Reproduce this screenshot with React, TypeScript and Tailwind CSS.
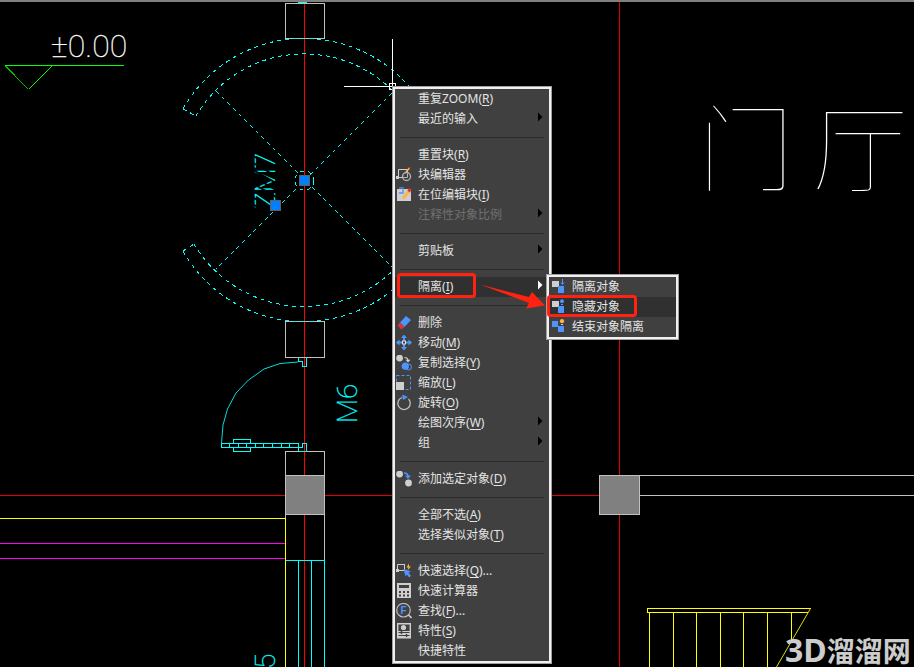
import type { ReactNode } from "react";
import clsx from "clsx";

/* ---------- types ---------- */
type MenuEntry = {
  label: string;
  hotkey?: string; // underlined access key, drawn in brackets
  suffix?: string;
  icon?: ReactNode;
  submenu?: boolean;
  disabled?: boolean;
  active?: boolean;
};

const GREY = "#cfcfcf";
const BLUE = "#4d94ff";
const ORANGE = "#ffb445";

/* ---------- icons ---------- */
function Glyph({ children }: { children: ReactNode }) {
  return (
    <svg width="16" height="16" viewBox="0 0 16 16" fill="none" aria-hidden="true">
      {children}
    </svg>
  );
}

const BlockEditIcon = (
  <Glyph>
    <path d="M11.5 5V2.5H2.5V10.5H8" stroke={GREY} />
    <rect x="0" y="9" width="3" height="3" fill={GREY} />
    <circle cx="10.5" cy="9.5" r="4" stroke="#b5b5b5" strokeWidth="1.3" />
    <path d="M11.5 6.5V10.5H7" stroke="#b5b5b5" />
    <path d="M10 5L13.5 1" stroke={ORANGE} strokeWidth="1.6" />
    <path d="M13 1.3L14 .1" stroke="#e03030" strokeWidth="1.6" />
  </Glyph>
);

const EditInPlaceIcon = (
  <Glyph>
    <path d="M1 2H15V14H1z" fill={GREY} />
    <path d="M3 .8H7V6H3" stroke={BLUE} strokeWidth="1.3" />
    <path d="M7 11.5L13 4" stroke={ORANGE} strokeWidth="3" />
    <path d="M12.5 4.5L14.5 2" stroke="#e03030" strokeWidth="3" />
  </Glyph>
);

const EraserIcon = (
  <Glyph>
    <path d="M4 7.5L10 1L15 5L8.5 12z" fill={BLUE} />
    <path d="M4 7.5L8.5 12L5.5 14.5L1.5 10.5z" fill="#e03038" />
  </Glyph>
);

const MoveIcon = (
  <Glyph>
    <path d="M8 1V14M1 7.5H15" stroke={BLUE} strokeWidth="2" />
    <path d="M8 -.5L11 3H5zM8 15.5L11 12H5zM0 7.5L3.5 4.5V10.5zM16 7.5L12.5 4.5V10.5z" fill={BLUE} />
    <rect x="6.5" y="6" width="3" height="3" fill="#404040" stroke="#e0e0e0" />
  </Glyph>
);

const CopyIcon = (
  <Glyph>
    <circle cx="3.6" cy="3.1" r="3.4" fill={GREY} />
    <path d="M8.5 2.5Q12 2.5 12 6" stroke={GREY} strokeWidth="1.2" />
    <path d="M9.5 4.8H14.5L12 7.4z" fill={GREY} />
    <circle cx="12.5" cy="12" r="3" stroke={BLUE} />
    <circle cx="9.3" cy="11.2" r="3.6" fill={BLUE} />
  </Glyph>
);

const ScaleIcon = (
  <Glyph>
    <rect x=".5" y=".5" width="14" height="14" stroke={BLUE} strokeDasharray="3 2" />
    <rect x="0" y="7" width="8" height="8" fill={GREY} />
  </Glyph>
);

const RotateIcon = (
  <Glyph>
    <path d="M12.5 4A6.2 6.2 0 1 1 6 2.5" stroke="#bdbdbd" strokeWidth="1.3" />
    <path d="M6 -.5L12 2L7 5z" fill={BLUE} />
  </Glyph>
);

const AddSelectedIcon = (
  <Glyph>
    <circle cx="3.6" cy="3" r="3.4" fill={GREY} />
    <circle cx="12.5" cy="12" r="3.4" fill={GREY} />
    <path d="M8 2Q12 2 12 5.5" stroke={BLUE} strokeWidth="1.5" />
    <path d="M9 4.5H15L12 8z" fill={BLUE} />
  </Glyph>
);

const QuickSelectIcon = (
  <Glyph>
    <path d="M9 1.5H1.5V8M1.5 7.5H8.5V1" stroke={GREY} />
    <rect x="0" y="6" width="3" height="3" fill={GREY} />
    <path d="M13 .5L10.5 4.5H12.5L11.5 7.5L15 3.5H13z" fill={ORANGE} />
    <path d="M7.5 6L15 8.5L12.5 9.8L15 12.8L13.2 14.5L10.8 11.5L9.5 13.5z" fill={BLUE} />
  </Glyph>
);

const CalculatorIcon = (
  <Glyph>
    <rect x="1" y="0" width="14" height="15" fill={GREY} />
    <path d="M3 3.5H13" stroke="#404040" strokeWidth="3" />
    <path d="M3 9H13M3 12.5H13" stroke="#404040" strokeWidth="2" strokeDasharray="2 2" />
  </Glyph>
);

const FindIcon = (
  <Glyph>
    <circle cx="7.5" cy="7.2" r="6.8" stroke="#bdbdbd" strokeWidth="1.2" />
    <path d="M12.5 12L15.5 15" stroke={GREY} strokeWidth="1.6" />
    <text x="7.5" y="11" textAnchor="middle" fill={BLUE} className="font-['Liberation_Sans'] text-[10px] font-bold">
      F
    </text>
  </Glyph>
);

const PropertiesIcon = (
  <Glyph>
    <path d="M1.7 .7H14.3V14.8H1.7z" stroke={GREY} strokeWidth="1.4" />
    <rect x="1" y="8" width="14" height="7" fill={GREY} />
    <circle cx="7.5" cy="4.5" r="2.6" fill={GREY} />
    <path d="M2.5 9.5H13.5M2.5 12.5H13.5" stroke="#404040" />
    <path d="M5.5 8V11M10.5 11V14" stroke="#404040" strokeWidth="1.5" />
  </Glyph>
);

const IsolateIcon = (
  <Glyph>
    <rect x="2" y="2" width="7" height="6" fill={GREY} />
    <rect x="8" y="7" width="6" height="7" fill={BLUE} />
    <path d="M12.5 0V5M11 3.5L12.5 5.5L14 3.5" stroke={BLUE} />
  </Glyph>
);

const HideIcon = (
  <Glyph>
    <rect x="2" y="2" width="7" height="6" fill={GREY} />
    <rect x="8" y="7" width="6" height="7" fill={BLUE} />
    <circle cx="12" cy="2.2" r="2" fill={BLUE} />
    <path d="M11 5.5H13" stroke={BLUE} />
  </Glyph>
);

const EndIsolateIcon = (
  <Glyph>
    <rect x="2" y="2" width="6" height="6" fill={BLUE} />
    <rect x="8" y="7" width="6" height="6" fill={BLUE} />
    <circle cx="12" cy="2.2" r="2.1" fill={ORANGE} />
    <path d="M11 5.5H13" stroke={GREY} />
  </Glyph>
);

/* ---------- menu data ---------- */
const groups: MenuEntry[][] = [
  [
    { label: "重复ZOOM", hotkey: "R" },
    { label: "最近的输入", submenu: true },
  ],
  [
    { label: "重置块", hotkey: "R" },
    { label: "块编辑器", icon: BlockEditIcon },
    { label: "在位编辑块", hotkey: "I", icon: EditInPlaceIcon },
    { label: "注释性对象比例", submenu: true, disabled: true },
  ],
  [{ label: "剪贴板", submenu: true }],
  [{ label: "隔离", hotkey: "I", submenu: true, active: true }],
  [
    { label: "删除", icon: EraserIcon },
    { label: "移动", hotkey: "M", icon: MoveIcon },
    { label: "复制选择", hotkey: "Y", icon: CopyIcon },
    { label: "缩放", hotkey: "L", icon: ScaleIcon },
    { label: "旋转", hotkey: "O", icon: RotateIcon },
    { label: "绘图次序", hotkey: "W", submenu: true },
    { label: "组", submenu: true },
  ],
  [{ label: "添加选定对象", hotkey: "D", icon: AddSelectedIcon }],
  [
    { label: "全部不选", hotkey: "A" },
    { label: "选择类似对象", hotkey: "T" },
  ],
  [
    { label: "快速选择", hotkey: "Q", suffix: "...", icon: QuickSelectIcon },
    { label: "快速计算器", icon: CalculatorIcon },
    { label: "查找", hotkey: "F", suffix: "...", icon: FindIcon },
    { label: "特性", hotkey: "S", icon: PropertiesIcon },
    { label: "快捷特性" },
  ],
];

const isolateGroups: MenuEntry[][] = [
  [
    { label: "隔离对象", icon: IsolateIcon },
    { label: "隐藏对象", icon: HideIcon, active: true },
    { label: "结束对象隔离", icon: EndIsolateIcon },
  ],
];

/* ---------- menu ---------- */
function MenuRow({ item }: { item: MenuEntry }) {
  return (
    <button
      type="button"
      role="menuitem"
      disabled={item.disabled}
      aria-haspopup={item.submenu ? "menu" : undefined}
      className={clsx(
        "flex h-5 w-full items-center gap-1.5 pr-1.5 pl-px text-left text-xs whitespace-nowrap",
        item.disabled ? "text-[#707070]" : "text-[#e4e4e4]",
        item.active && "bg-[#303030]"
      )}
    >
      <span className="size-4 shrink-0">{item.icon}</span>
      <span className="flex-1">
        {item.label}
        {item.hotkey && (
          <>
            (<u className="underline-offset-2">{item.hotkey}</u>)
          </>
        )}
        {item.suffix}
      </span>
      {item.submenu && (
        <svg width="5" height="20" viewBox="0 0 5 20" aria-hidden="true">
          <path d="M0 3.5V12.5L4.5 8z" fill={item.active ? "#fff" : "#000"} />
        </svg>
      )}
    </button>
  );
}

function Menu({ groups, label, className }: { groups: MenuEntry[][]; label: string; className: string }) {
  return (
    <div role="menu" aria-label={label} className={clsx("absolute border border-[#a0a0a0]", className)}>
      <div className="border-2 border-[#f0f0f0] bg-[#404040]">
        {groups.map((group, i) => (
          <div key={i} role="group">
            {i > 0 && <hr className="mx-[5px] mt-2 mb-[7px] border-t border-[#2c2c2c]" />}
            {group.map((item) => (
              <MenuRow key={item.label} item={item} />
            ))}
          </div>
        ))}
      </div>
    </div>
  );
}

/* ---------- floor plan ---------- */
function FloorPlan() {
  return (
    <svg
      width="914"
      height="667"
      viewBox="0 0 914 667"
      fill="none"
      shapeRendering="crispEdges"
      className="absolute top-0 left-0"
    >
      <defs>
        <pattern id="dashes" width="6" height="6" patternUnits="userSpaceOnUse" patternTransform="rotate(30)">
          <rect width="4" height="6" fill="#00ffff" />
        </pattern>
      </defs>

      {/* axes */}
      <g stroke="#ff0000">
        <path d="M304.5 2V667" />
        <path d="M0 495.5H599M619.5 2V667" stroke="#e00000" />
      </g>

      {/* level mark */}
      <path d="M5 65.5H124" stroke="#00ff00" />
      <path d="M52 66L28.5 89.5" stroke="#00ff00" />
      <path d="M5.5 66L28.5 89.5" stroke="#00c000" />

      {/* walls */}
      <g stroke="#c0c0c0">
        <path d="M285.5 3.5H324.5V38.5H285.5zM285.5 321.5H324.5V357.5H285.5z" />
        <path d="M285.5 518V451.5H324.5V560" />
        <path d="M639 475.5H914M639 495.5H914" />
        <path d="M285.5 475.5H324.5V514.5H285.5zM599.5 475.5H639.5V514.5H599.5z" fill="#808080" />
      </g>

      {/* revolving door */}
      <g stroke="#00ffff" strokeDasharray="4 4">
        <path d="M183 109A139 139 0 0 1 425 109" />
        <path d="M196 116A125 125 0 0 1 412 116" />
        <path d="M183 109L196 116" />
        <path d="M183 251A139 139 0 0 0 425 251" />
        <path d="M194 244A128 128 0 0 0 414 244" />
        <path d="M183 251L194 244" />
        <path d="M216 91L392 267M392 93L216 269" />
        <circle cx="304.5" cy="180.5" r="9.5" />
      </g>
      <path d="M298 2.5H307" stroke="#00ffff" />

      {/* swing door */}
      <g stroke="#00ffff">
        <path d="M298.5 357V361.5H302.5V366.5H306.5V357" />
        <path
          d="M298 362L280 363.5L264 369L248.5 380L236 393L227.5 409L223 425L221.5 443"
          stroke="#00dddd"
          shapeRendering="auto"
        />
        <path d="M298.5 451V443.5H221.5V447.5H302.5V443.5H306.5V451.5H298.5" />
        <path d="M233.5 443V439.5H250.5V443M233.5 448V451.5H250.5V448" />
        <path d="M229.5 443V448M238.5 443V448M246.5 443V448M255.5 443V448M263.5 443V448M272.5 443V448M281.5 443V448M289.5 443V448" />
        <path d="M285 560.5H324.5V667M298.5 560V667M311.5 560V667" />
      </g>

      {/* steps and ducts */}
      <g stroke="#ff00ff">
        <path d="M0 543.5H285M0 558.5H285" />
      </g>
      <g stroke="#ffff00">
        <path d="M0 518.5H285.5V667" />
        <path d="M808 612.5H647.5V608.5H810.5" />
        <path d="M649.5 613V667M673.5 613V667M696.5 613V667M720.5 613V667M743.5 613V667M767.5 613V667M791.5 613V641" />
        <path d="M810.5 608.5L776.5 667" stroke="#dddd00" shapeRendering="auto" />
      </g>

      {/* annotations */}
      <g className="font-['Roboto','Noto_Sans_CJK_SC',sans-serif] font-light">
        <text x="51" y="57" fill="#fff" className="text-[32px] font-thin" stroke="#fff" strokeWidth="0.3">
          ±0.00
        </text>
        <text
          x="698 812"
          y="184"
          fill="#fff"
          stroke="#000"
          strokeWidth="1.6"
          className="font-['Noto_Sans_CJK_SC',sans-serif] text-[96px] font-thin"
        >
          门厅
        </text>
        <g fill="#00ffff" className="text-[28px] font-thin">
          <text transform="translate(357 423) rotate(-90)" stroke="#00ffff" strokeWidth="0.3">
            M6
          </text>
          <text transform="translate(275 669) rotate(-90)" stroke="#00ffff" strokeWidth="0.3">
            5
          </text>
          <text transform="translate(275 209) rotate(-90)" fill="url(#dashes)" stroke="url(#dashes)" strokeWidth="0.4">
            ZM7
          </text>
        </g>
      </g>

      {/* grips */}
      <g fill="#0080ff" stroke="#606060">
        <rect x="299.5" y="175.5" width="10" height="10" />
        <rect x="270.5" y="200.5" width="10" height="10" />
      </g>

      {/* crosshair */}
      <g stroke="#ffffff">
        <path d="M392.5 39V86M344 86.5H392" />
        <rect x="389.5" y="83.5" width="6" height="6" />
      </g>
    </svg>
  );
}

/* ---------- page ---------- */
export default function App() {
  return (
    <main className="relative min-h-screen overflow-hidden border-t-2 border-[#808080] bg-black font-['Noto_Sans','Noto_Sans_CJK_SC',sans-serif]">
      <div className="absolute -top-0.5 left-0">
        <FloorPlan />
        <p className="absolute top-[634px] left-[785px] text-[28px] leading-8 font-bold whitespace-nowrap text-[#cccccc]">
          <span className="text-[32px]">3D</span>溜溜网
        </p>

        <Menu groups={groups} label="快捷菜单" className="top-[86px] left-[392px] w-40" />
        <Menu groups={isolateGroups} label="隔离" className="top-[274px] left-[546px] w-[133px]" />

        {/* callouts */}
        <svg
          width="914"
          height="667"
          viewBox="0 0 914 667"
          fill="none"
          className="pointer-events-none absolute top-0 left-0"
        >
          <g stroke="#ff2211" strokeWidth="3">
            <rect x="398.5" y="274.5" width="76" height="22" rx="2" />
            <rect x="548.5" y="296.5" width="87" height="19" rx="2" />
          </g>
          <path d="M480 284.5L529 297L532 292L545 305.5L526 308.5L529 303z" fill="#ff2211" />
        </svg>
      </div>
    </main>
  );
}
